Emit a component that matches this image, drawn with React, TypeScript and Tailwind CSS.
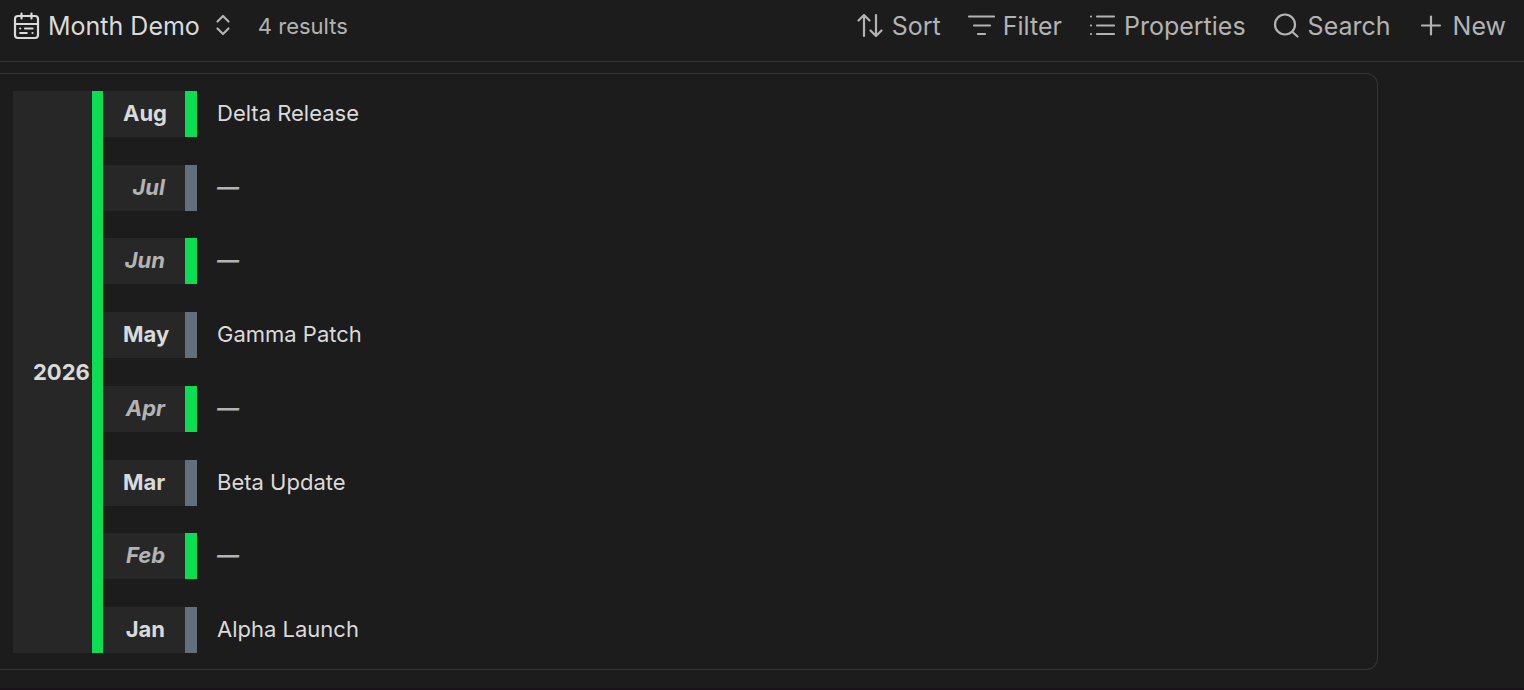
import type { ReactNode } from "react";

type Month = { label: string; entry?: string; active: boolean };

const months: Month[] = [
  { label: "Aug", entry: "Delta Release", active: true },
  { label: "Jul", active: false },
  { label: "Jun", active: true },
  { label: "May", entry: "Gamma Patch", active: false },
  { label: "Apr", active: true },
  { label: "Mar", entry: "Beta Update", active: false },
  { label: "Feb", active: true },
  { label: "Jan", entry: "Alpha Launch", active: false },
];

function Icon({ children, className = "" }: { children: ReactNode; className?: string }) {
  return (
    <svg
      viewBox="0 0 28 28"
      className={`h-7 w-7 shrink-0 ${className}`}
      fill="none"
      stroke="currentColor"
      strokeWidth="2.2"
      strokeLinecap="round"
      strokeLinejoin="round"
      aria-hidden="true"
    >
      {children}
    </svg>
  );
}

function ToolButton({ icon, label }: { icon: ReactNode; label: string }) {
  return (
    <button type="button" className="flex items-center gap-2 whitespace-nowrap text-[#b3b3b3]">
      {icon}
      {label}
    </button>
  );
}

function Toolbar() {
  return (
    <header className="flex items-center justify-between border-b border-[#363636] pt-2 pr-[18px] pb-[17px] pl-3 text-[25px] leading-9">
      <div className="flex items-center gap-[22px]">
        <button type="button" className="flex items-center gap-2 whitespace-nowrap text-[#dadada]">
          <Icon>
            <rect x="3" y="4" width="23" height="22" rx="3" />
            <path d="M3 12h23M9.500 1.500V6.500M19.500 1.500V6.500" />
            <path d="M8.200 16.500h.01M13 16.500h7.500M8.200 21h6.500M20.500 21h.01" />
          </Icon>
          Month Demo
          <Icon className="text-[#b3b3b3]">
            <path d="M9.500 9.500L15 4l5.500 5.500M9.500 16.500L15 22l5.500-5.500" />
          </Icon>
        </button>
        <span className="text-[22px] text-[#b3b3b3]">4 results</span>
      </div>
      <div className="flex items-center gap-[26px]">
        <ToolButton
          label="Sort"
          icon={
            <Icon>
              <path d="M2.500 8.500L8 3 13.500 8.500M8 3V24M14.500 18.500l5.500 5.500 5.500-5.500M20 24V3" />
            </Icon>
          }
        />
        <ToolButton
          label="Filter"
          icon={
            <Icon>
              <path d="M2 4.500h25M7 13.500h16M11 22h7" />
            </Icon>
          }
        />
        <ToolButton
          label="Properties"
          icon={
            <Icon>
              <path d="M3 4.500h.01M9 4.500h17M3 13.500h.01M9 13.500h17M3 22h.01M9 22h17" />
            </Icon>
          }
        />
        <ToolButton
          label="Search"
          icon={
            <Icon>
              <circle cx="13" cy="12.500" r="10" />
              <path d="M20.500 20l5 4.500" />
            </Icon>
          }
        />
        <ToolButton
          label="New"
          icon={
            <Icon>
              <path d="M5 13.500h18M14 4.500v18" />
            </Icon>
          }
        />
      </div>
    </header>
  );
}

function MonthRow({ month }: { month: Month }) {
  const filled = month.entry !== undefined;
  return (
    <li className="flex items-stretch">
      <span
        className={`w-[94px] border-r-12 bg-[#272727] px-5 pt-[7px] pb-[9px] text-right font-bold ${
          month.active ? "border-[#0bde52]" : "border-[#62707d]"
        } ${filled ? "text-[#dadada]" : "text-[#b3b3b3] italic"}`}
      >
        {month.label}
      </span>
      <span className={`px-5 pt-[7px] pb-[9px] ${filled ? "text-[#dadada]" : "font-bold text-[#b3b3b3] italic"}`}>
        {month.entry ?? "—"}
      </span>
    </li>
  );
}

export default function App() {
  return (
    <div className="flex min-h-screen flex-col border-b-2 border-[#191319] bg-[#1c1c1c] font-['Inter','Liberation_Sans',sans-serif]">
      <Toolbar />
      <main className="mt-[11px] mr-[146px] mb-[18px] flex flex-1 rounded-r-xl border border-l-0 border-[#363636] pt-[17px] pb-4 pl-[13px] text-[22px] leading-[30px]">
        <h2 className="flex w-[90px] items-center border-r-11 border-[#0bde52] bg-[#272727] pl-5 font-bold text-[#dadada]">
          2026
        </h2>
        <ul className="flex flex-1 flex-col justify-between">
          {months.map((month) => (
            <MonthRow key={month.label} month={month} />
          ))}
        </ul>
      </main>
    </div>
  );
}
